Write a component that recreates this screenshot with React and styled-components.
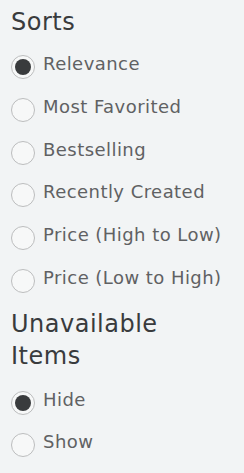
import React, { useState } from "react";
import styled, { createGlobalStyle } from "styled-components";

const Global = createGlobalStyle`
  html, body { margin: 0; padding: 0; background: #f2f4f5; }
  body { font-family: "DejaVu Sans", "Open Sans", sans-serif; }
`;

const Panel = styled.div`
  width: 244px;
  box-sizing: border-box;
  padding: 6px 0 0 11px;
  background: #f2f4f5;
  min-height: 473px;
`;

const Section = styled.section`
  margin-bottom: 6px;
`;

const Heading = styled.h2`
  margin: 0 0 ${(p) => p.$gap}px 0;
  font-size: 24px;
  line-height: 32px;
  font-weight: 400;
  letter-spacing: 0.5px;
  color: #393b3d;
  width: 175px;
`;

const List = styled.div`
  display: flex;
  flex-direction: column;
`;

const Row = styled.label`
  display: flex;
  align-items: center;
  gap: 8px;
  height: ${(p) => p.$h}px;
  cursor: pointer;
`;

const Circle = styled.span`
  box-sizing: border-box;
  width: 24px;
  height: 24px;
  border-radius: 50%;
  border: 1px solid #bcbdbe;
  background: #f7f8f8;
  display: flex;
  align-items: center;
  justify-content: center;
  flex: none;
  &::after {
    content: "";
    width: 16px;
    height: 16px;
    border-radius: 50%;
    background: #393b3d;
    display: ${(p) => (p.$on ? "block" : "none")};
  }
`;

const Label = styled.span`
  font-size: 18px;
  line-height: 24px;
  padding-bottom: 6px;
  letter-spacing: 0.45px;
  color: #606163;
  white-space: nowrap;
`;

function RadioGroup({ options, value, onChange, h }) {
  return (
    <List>
      {options.map((o) => (
        <Row key={o} $h={h} onClick={() => onChange(o)}>
          <Circle $on={value === o} />
          <Label>{o}</Label>
        </Row>
      ))}
    </List>
  );
}

export default function App() {
  const [sort, setSort] = useState("Relevance");
  const [avail, setAvail] = useState("Hide");
  return (
    <Panel>
      <Global />
      <Section>
        <Heading $gap={8}>Sorts</Heading>
        <RadioGroup
          h={42.7}
          value={sort}
          onChange={setSort}
          options={[
            "Relevance",
            "Most Favorited",
            "Bestselling",
            "Recently Created",
            "Price (High to Low)",
            "Price (Low to High)",
          ]}
        />
      </Section>
      <Section>
        <Heading $gap={10}>Unavailable Items</Heading>
        <RadioGroup h={42} value={avail} onChange={setAvail} options={["Hide", "Show"]} />
      </Section>
    </Panel>
  );
}
